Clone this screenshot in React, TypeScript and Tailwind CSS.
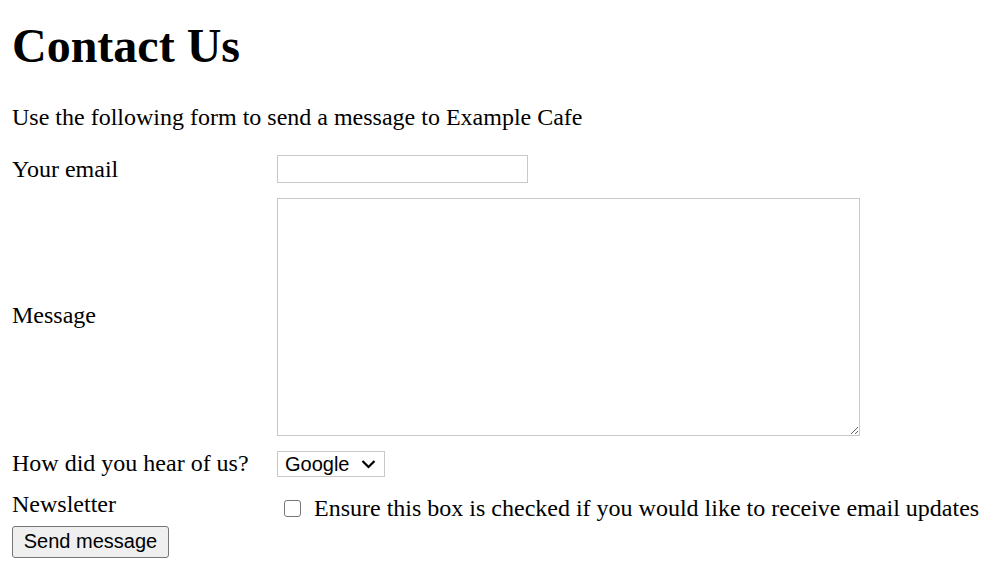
import React from "react";

export default function App() {
  return (
    <div className="min-h-screen bg-white pl-[12px] font-['Liberation_Serif',serif] text-black">
      <h1 className="mt-[18px] text-[48px] font-bold leading-[56px]">Contact Us</h1>
      <p className="mt-[29px] text-[24px] leading-[28px]">
        Use the following form to send a message to Example Cafe
      </p>

      <form className="text-[24px] leading-[28px]" onSubmit={(e) => e.preventDefault()}>
        {/* email */}
        <div className="mt-[24px] flex h-[28px] items-center">
          <label className="w-[265px]">Your email</label>
          <input
            type="email"
            className="h-[28px] w-[251px] border border-[#c8c8c8] bg-white px-1 font-['Liberation_Sans',sans-serif] text-[20px] outline-none"
          />
        </div>

        {/* message */}
        <div className="mt-[15px] flex items-center">
          <label className="w-[265px] pb-[4px]">Message</label>
          <textarea className="h-[238px] w-[583px] resize border border-[#c8c8c8] bg-white outline-none" />
        </div>

        {/* source */}
        <div className="mt-[15px] flex h-[26px] items-center">
          <label className="w-[265px] pb-[3px]">How did you hear of us?</label>
          <div className="flex h-[26px] w-[108px] items-center justify-between border border-[#c8c8c8] pl-[7px] pr-[8px] font-['Liberation_Sans',sans-serif] text-[20px] leading-[24px]">
            <span>Google</span>
            <svg width="15" height="10" viewBox="0 0 15 10" fill="none">
              <path d="M1.5 2 7.5 8 13.5 2" stroke="#000" strokeWidth="2.2" />
            </svg>
          </div>
        </div>

        {/* newsletter */}
        <div className="mt-[13px] flex items-start">
          <label className="w-[265px]">Newsletter</label>
          <div className="mt-[4px] flex items-center">
            <span className="ml-[7px] mr-[13px] inline-block h-[17px] w-[17px] rounded-[3px] border-[1.5px] border-[#767676] bg-white" />
            <span>Ensure this box is checked if you would like to receive email updates</span>
          </div>
        </div>

        <button
          type="submit"
          className="mt-[4px] h-[32px] w-[157px] rounded-[3px] border border-[#767676] bg-[#efefef] pb-[2px] font-['Liberation_Sans',sans-serif] text-[20px] leading-[24px] text-black"
        >
          Send message
        </button>
      </form>
    </div>
  );
}
